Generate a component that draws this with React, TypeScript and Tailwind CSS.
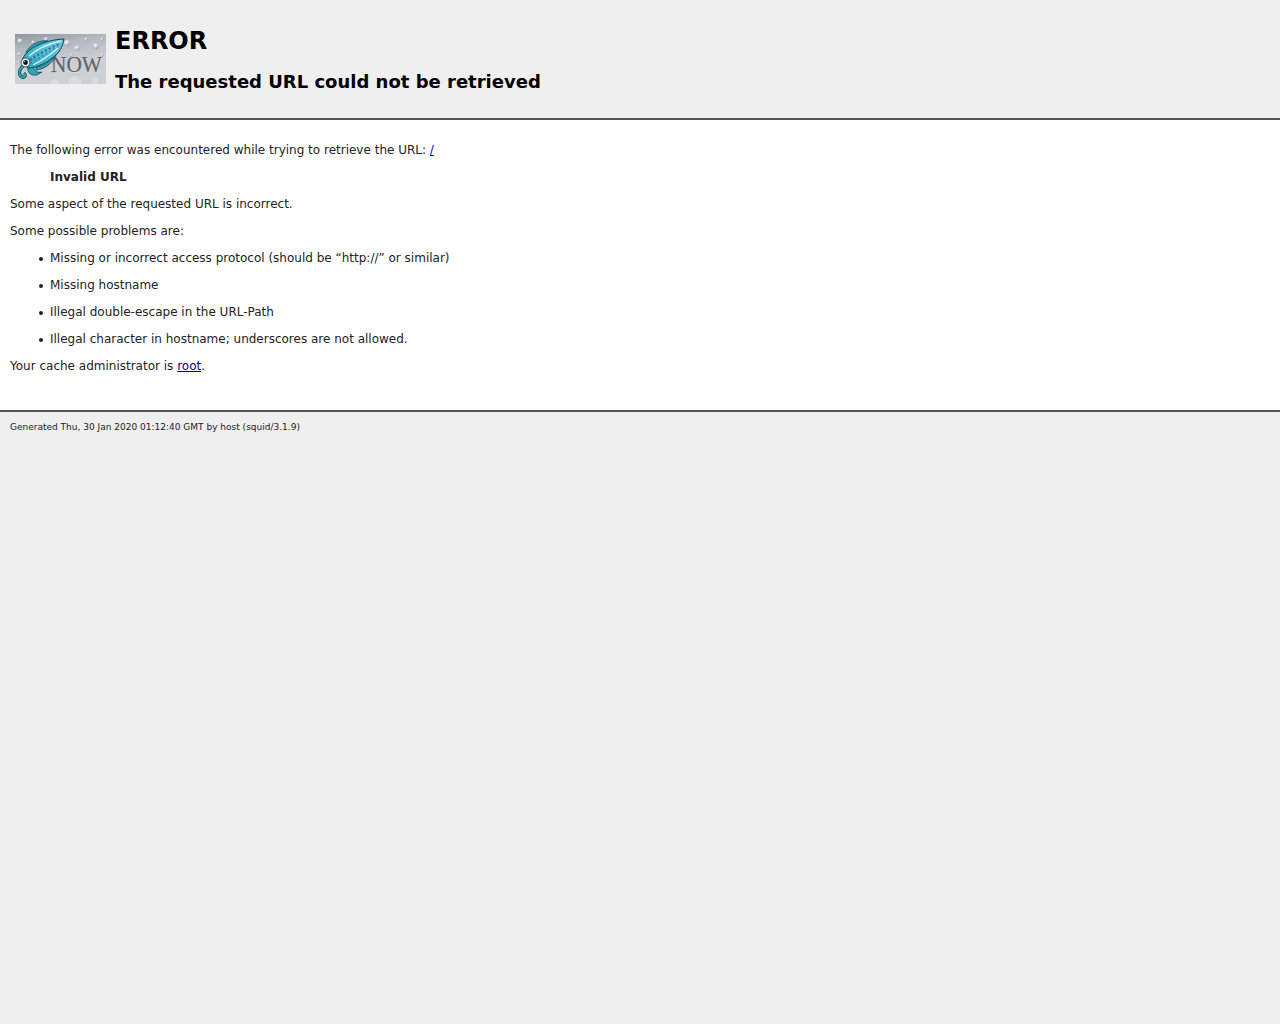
import React from "react";

const bubbles = [
  [52, 9, 3], [62, 14, 2.6], [71, 5, 1.6], [81, 12, 2.8], [87, 5, 1.4], [56, 21, 1.4],
  [31, 5, 2], [5, 7, 2.4], [18, 8, 1.6], [87, 21, 1.4], [4, 20, 1.5],
];

const problems = [
  "Missing or incorrect access protocol (should be “http://” or similar)",
  "Missing hostname",
  "Illegal double-escape in the URL-Path",
  "Illegal character in hostname; underscores are not allowed.",
];

const Logo: React.FC = () => (
  <svg width="91" height="50" viewBox="0 0 91 50" className="block shrink-0">
    <defs>
      <linearGradient id="bg" x1="0" y1="0" x2="0.3" y2="1">
        <stop offset="0" stopColor="#8f95a0" />
        <stop offset="0.3" stopColor="#b4b8bf" />
        <stop offset="0.7" stopColor="#cdcfd3" />
        <stop offset="1" stopColor="#cfd1d4" />
      </linearGradient>
      <radialGradient id="bub" cx="0.35" cy="0.3" r="0.8">
        <stop offset="0" stopColor="#f4f5f7" />
        <stop offset="0.6" stopColor="#c4c8ce" />
        <stop offset="1" stopColor="#868b94" />
      </radialGradient>
      <linearGradient id="body" x1="0" y1="1" x2="1" y2="0">
        <stop offset="0" stopColor="#2aa7bd" />
        <stop offset="1" stopColor="#5fd0e2" />
      </linearGradient>
      <filter id="soft">
        <feGaussianBlur stdDeviation="0.4" />
      </filter>
      <filter id="softer">
        <feGaussianBlur stdDeviation="0.9" />
      </filter>
    </defs>
    <rect width="91" height="50" fill="url(#bg)" />
    {/* bubbles */}
    <g filter="url(#soft)">
      {bubbles.map(([cx, cy, r], i) => (
        <circle key={i} cx={cx} cy={cy} r={r} fill="url(#bub)" />
      ))}
    </g>
    <g filter="url(#softer)" fill="#dfe1e4" fillOpacity="0.7" stroke="#a5a9b0" strokeWidth="0.5">
      <circle cx="60" cy="49" r="8" />
      <circle cx="40" cy="50" r="6" />
      <circle cx="80" cy="47" r="5" />
    </g>
    {/* NOW */}
    <text x="36.5" y="38.5" fontFamily="'Liberation Serif', serif" fontSize="23" fill="#f2f3f5" opacity="0.7" textLength="51" lengthAdjust="spacingAndGlyphs">NOW</text>
    <text x="36" y="38" fontFamily="'Liberation Serif', serif" fontSize="23" fill="#5f636b" stroke="#5f636b" strokeWidth="0.25" textLength="51" lengthAdjust="spacingAndGlyphs">NOW</text>
    {/* squid */}
    <g filter="url(#soft)">
      {/* tentacles */}
      <path d="M9 31 C4 35 3 41 7 43 C9 44 11 42 10 40" stroke="#134a58" strokeWidth="3.2" fill="none" strokeLinecap="round" />
      <path d="M9 31 C4 35 3 41 7 43 C9 44 11 42 10 40" stroke="#2ba8ad" strokeWidth="1.8" fill="none" strokeLinecap="round" />
      <path d="M13 33 C12 38 15 42 22 41 L27 38 C23 39 20 38 18 33 Z" fill="#2fa9b3" stroke="#134a58" strokeWidth="0.8" />
      {/* fins and mantle */}
      <path d="M11 18 C17 9 26 6 33 7 C27 14 20 19 12 23 Z" fill="#2fa5bb" stroke="#123f50" strokeWidth="0.8" />
      <path d="M21 33 C30 32 37 26 42 18 C39 28 31 35 21 36 Z" fill="#2fa5bb" stroke="#123f50" strokeWidth="0.8" />
      <path d="M7 27 C10 15 28 6 49 5 C48 11 46 16 41 21 C33 28 23 34 13 34 Z" fill="url(#body)" stroke="#123f50" strokeWidth="1" />
      <path d="M14 22 C22 15 32 10 46 7" stroke="#d8f3f6" strokeWidth="1.3" fill="none" />
      <path d="M15 26 C24 20 33 15 46 9" stroke="#5b3f9a" strokeWidth="1.8" strokeDasharray="1.8 2.6" fill="none" />
      <path d="M18 31 C26 27 34 22 43 14" stroke="#d8f3f6" strokeWidth="1.3" fill="none" />
      <path d="M16 29 C25 24 33 19 43 12" stroke="#7a4fa8" strokeWidth="1.3" strokeDasharray="1.4 3" fill="none" />
      {/* eye */}
      <circle cx="10.5" cy="28.5" r="4.4" fill="#f6f6f6" stroke="#123f50" strokeWidth="0.8" />
      <circle cx="10.5" cy="28.5" r="2.4" fill="#0d0d0d" />
      <circle cx="9.6" cy="27.6" r="0.6" fill="#fff" />
    </g>
  </svg>
);

const App: React.FC = () => {
  return (
    <div className="min-h-[1024px] bg-[#efefef] font-['DejaVu_Sans',sans-serif] text-xs text-[#222]">
      {/* Title band */}
      <div className="flex h-[118px] pl-[15px] pt-[34px] bg-[#efefef]">
        <Logo />
        <div className="ml-[9px] -mt-[34px] pt-[25px] text-black font-bold">
          <h1 className="text-2xl leading-[32px]">ERROR</h1>
          <h2 className="mt-[13px] text-lg leading-[24px] whitespace-nowrap">The requested URL could not be retrieved</h2>
        </div>
      </div>
      <hr className="h-[2px] border-0 bg-[#555]" />

      {/* Error body */}
      <div className="h-[290px] bg-white px-[10px] pt-[23px] leading-[15px]">
        <p>
          The following error was encountered while trying to retrieve the URL:{" "}
          <a href="#" className="text-[#0000ee] underline">/</a>
        </p>
        <p className="mt-3 ml-10 font-bold">Invalid URL</p>
        <p className="mt-3">Some aspect of the requested URL is incorrect.</p>
        <p className="mt-3">Some possible problems are:</p>
        <ul className="ml-10">
          {problems.map((p) => (
            <li
              key={p}
              className="relative mt-3 before:absolute before:left-[-11px] before:top-[6px] before:size-[4px] before:rounded-full before:bg-[#222]"
            >
              {p}
            </li>
          ))}
        </ul>
        <p className="mt-3">
          Your cache administrator is <a href="#" className="text-[#000099] underline">root</a>.
        </p>
      </div>
      <hr className="h-[2px] border-0 bg-[#555]" />

      <div className="pl-[10px] pt-[10px] text-[9px] leading-[11px]">
        Generated Thu, 30 Jan 2020 01:12:40 GMT by host (squid/3.1.9)
      </div>
    </div>
  );
};

export default App;
